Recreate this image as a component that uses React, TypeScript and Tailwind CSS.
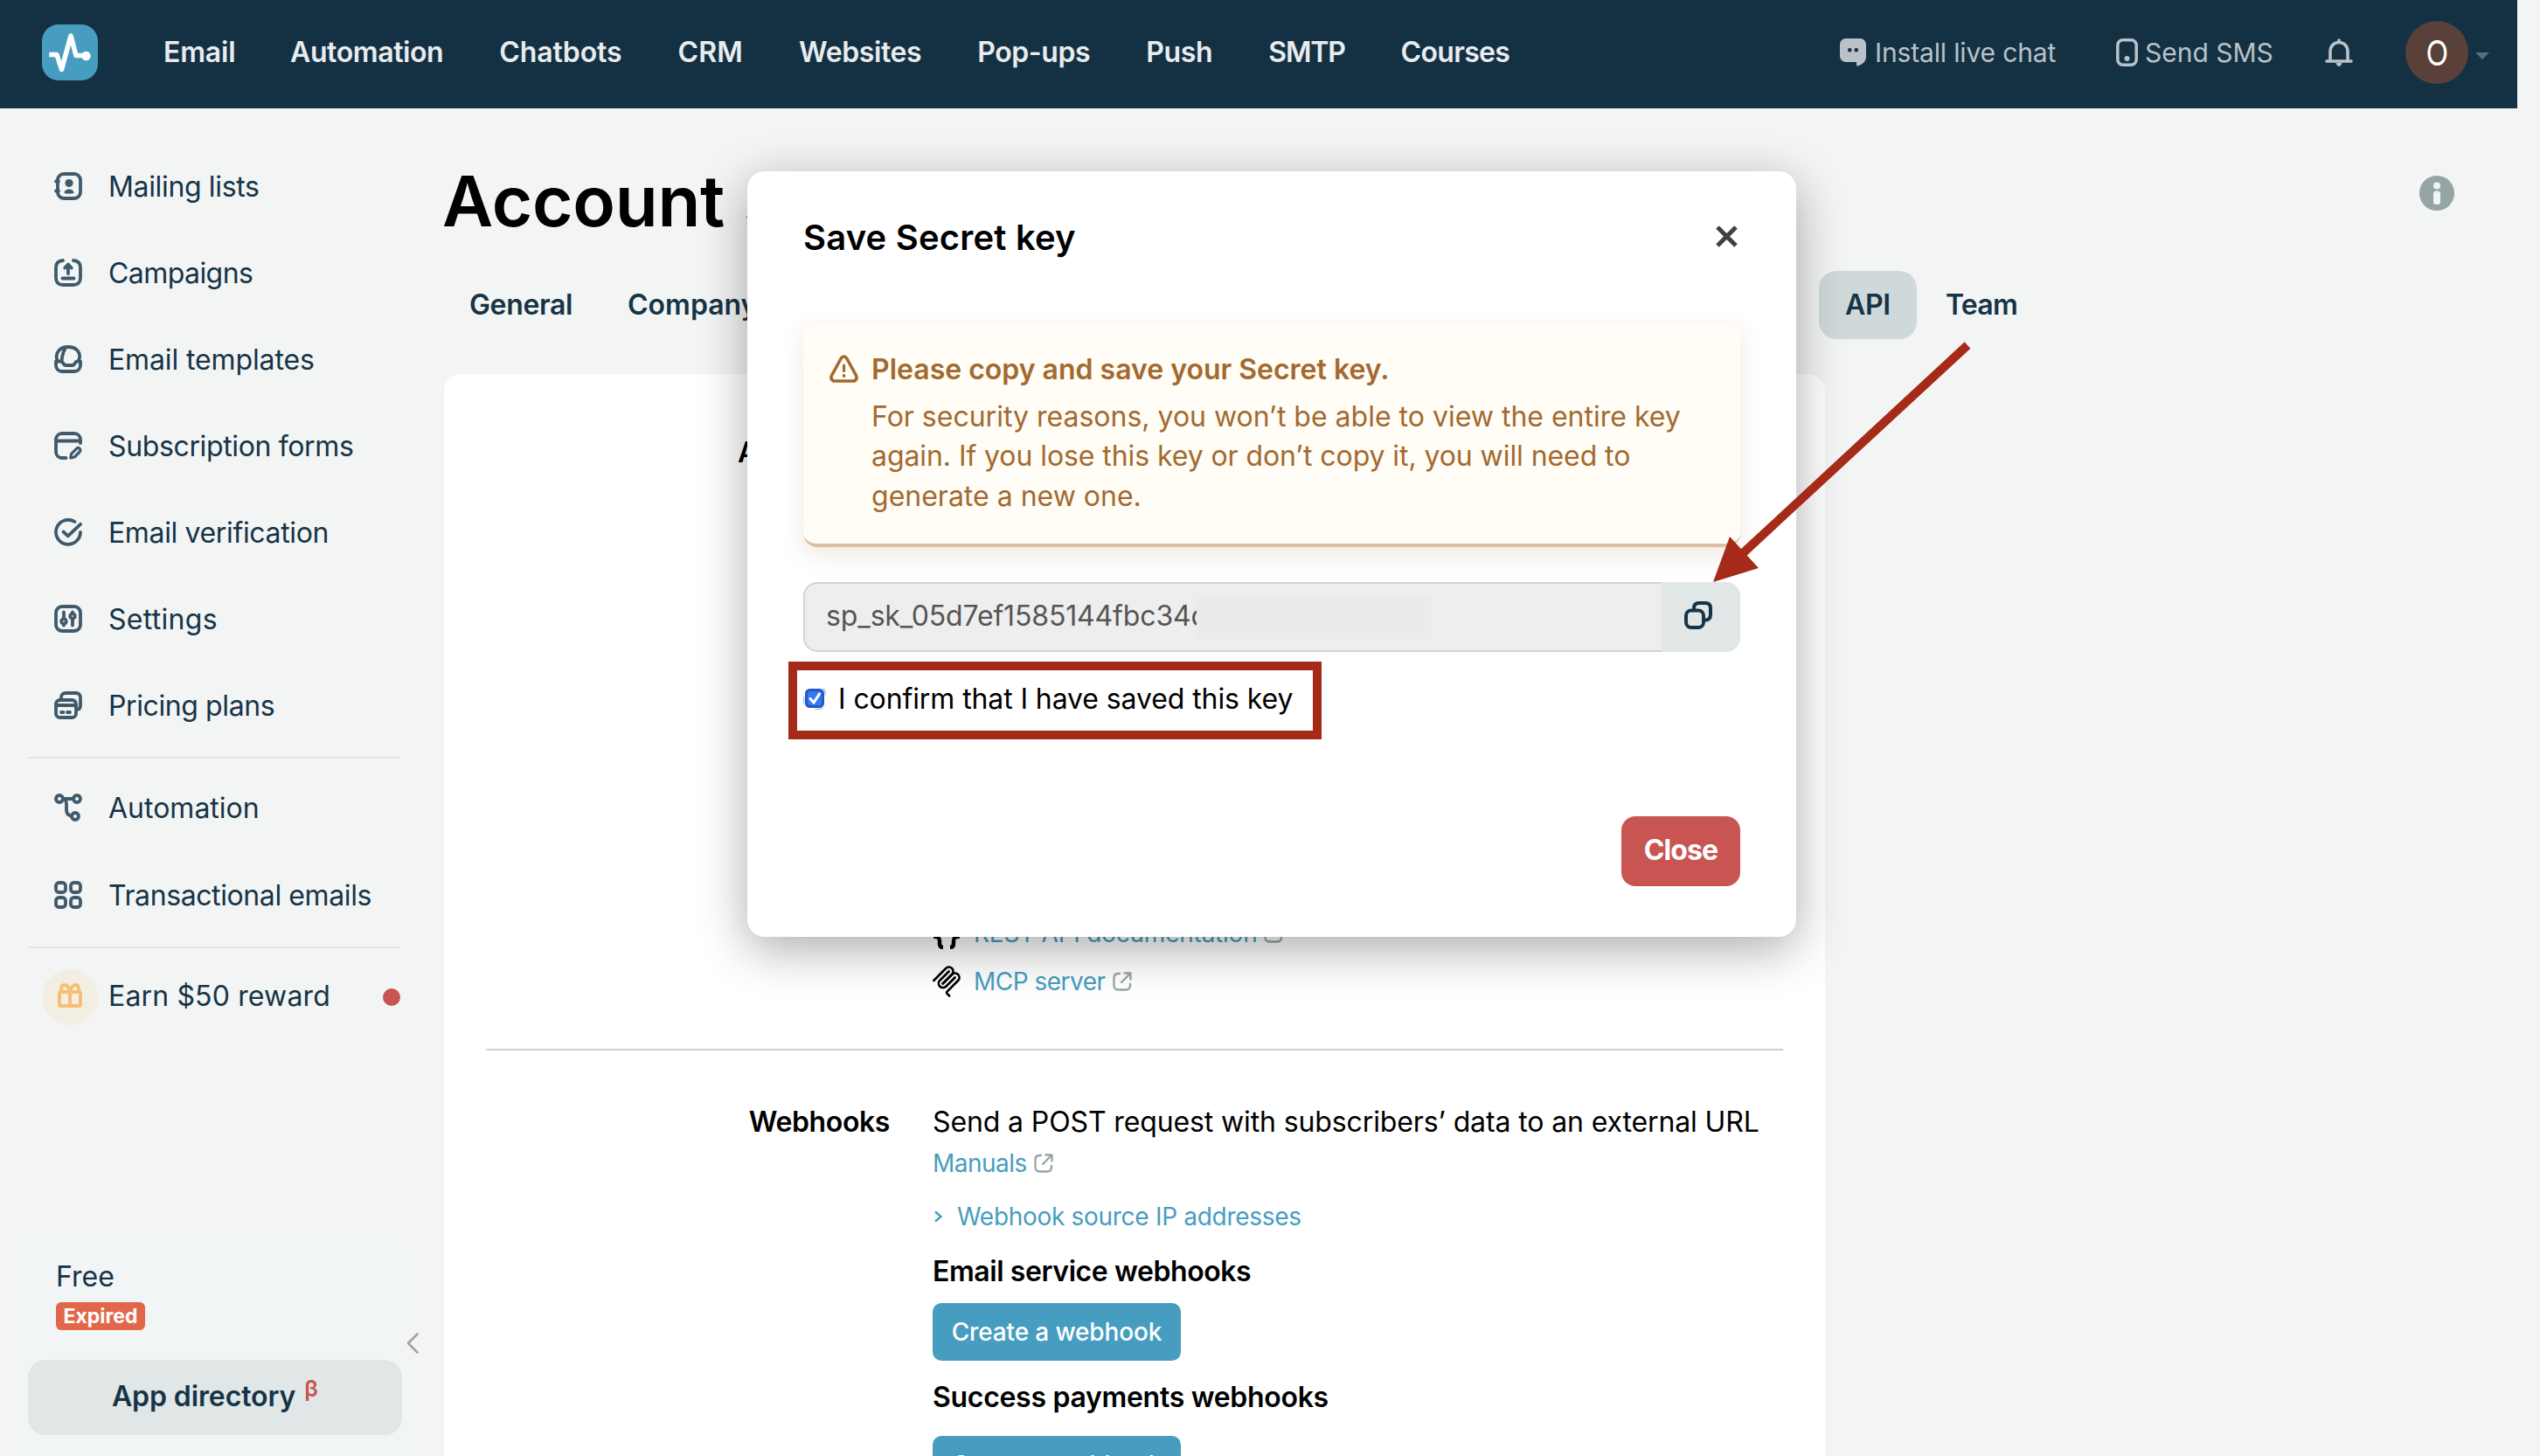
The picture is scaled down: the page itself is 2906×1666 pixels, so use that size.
import { useState, type ReactNode } from 'react';

const navItems = [
  { label: 'Email', className: 'w-[81px] tracking-[-0.2px]' },
  { label: 'Automation', className: 'tracking-[-0.4px]' },
  { label: 'Chatbots', className: 'tracking-[-0.1px]' },
  { label: 'CRM', className: 'tracking-[0.2px]' },
  { label: 'Websites', className: 'tracking-[-0.4px]' },
  { label: 'Pop-ups', className: 'tracking-[-0.4px]' },
  { label: 'Push', className: 'tracking-[-0.35px]' },
  { label: 'SMTP', className: 'tracking-[-1.2px]' },
  { label: 'Courses', className: 'tracking-[-0.7px]' },
];

function MenuIcon({ children }: { children: ReactNode }) {
  return (
    <svg
      viewBox="0 0 32 32"
      className="size-8 shrink-0 text-[#405a6b]"
      fill="none"
      stroke="currentColor"
      strokeWidth="3.8"
      strokeLinecap="round"
      strokeLinejoin="round"
    >
      {children}
    </svg>
  );
}

const mainMenu = [
  {
    label: 'Mailing lists',
    className: 'tracking-[-0.35px]',
    icon: (
      <>
        <rect x="4" y="2" width="26" height="28" rx="7" />
        <path d="M2 10.5h3M2 21.5h3" />
        <circle cx="17" cy="12.5" r="4.6" fill="currentColor" stroke="none" />
        <path d="M11.5 24c0-3 2.4-4.6 5.5-4.6s5.5 1.6 5.5 4.6c-3.5 1-7.5 1-11 0z" fill="currentColor" stroke="none" />
      </>
    ),
  },
  {
    label: 'Campaigns',
    className: 'tracking-[-0.57px]',
    icon: (
      <>
        <path d="M10 2C5 2.5 2 5 2 10v12c0 5 3 8 8 8h12c5 0 8-3 8-8V10c0-5-3-7.5-8-8" />
        <path d="M16 17V8M12.2 10.5L16 6.5l3.8 4" />
        <path d="M9.5 22.5h13" />
      </>
    ),
  },
  {
    label: 'Email templates',
    className: 'tracking-[-0.12px]',
    icon: (
      <>
        <path d="M3.5 17.5C.5 9 6 2 16 2s15.5 7 12 15.5" />
        <path d="M12.5 4C10 8 9 13 8.5 18" />
        <path d="M2 18.5V23c0 4 3 7 7 7h14c4 0 7-3 7-7v-4.5h-3.5c-1.5 0-2 .7-2.7 2-.8 1.5-1.8 2.5-3.3 2.5h-7c-1.5 0-2.5-1-3.3-2.5-.7-1.3-1.2-2-2.7-2z" />
      </>
    ),
  },
  {
    label: 'Subscription forms',
    className: 'tracking-[-0.36px]',
    icon: (
      <>
        <path d="M30 13V9c0-4-3-7-7-7H9C5 2 2 5 2 9v14c0 4 3 7 7 7h4.5" />
        <path d="M2 10.5h28" />
        <path d="M18.8 30l.8-4.6 6-6c1-1 2.6-1 3.6 0s1 2.6 0 3.6l-6 6z" strokeWidth="3.2" />
      </>
    ),
  },
  {
    label: 'Email verification',
    className: 'tracking-[-0.36px]',
    icon: (
      <>
        <path d="M23.5 4A14 14 0 1 0 30 15.8" />
        <path d="M10.5 15.5l5.3 4.8L30 6.8" />
      </>
    ),
  },
  {
    label: 'Settings',
    className: 'tracking-[0.3px]',
    icon: (
      <>
        <rect x="2" y="2" width="28" height="28" rx="7" />
        <path d="M11 8.5v15M21 8.5v15" />
        <circle cx="11" cy="19" r="2.8" fill="#f3f5f4" />
        <circle cx="21" cy="13" r="2.8" fill="#f3f5f4" />
      </>
    ),
  },
  {
    label: 'Pricing plans',
    className: 'tracking-[-0.4px]',
    icon: (
      <>
        <path d="M8 9V7c0-3 2-5 5-5h12c3 0 5 2 5 5v9c0 3-1 4.5-3.5 5" />
        <rect x="2" y="10" width="23" height="20" rx="4.5" />
        <path d="M2 16h23" />
        <path d="M8 24h2.5M15 24h3" />
      </>
    ),
  },
];

const serviceMenu = [
  {
    label: 'Automation',
    className: '',
    icon: (
      <>
        <circle cx="6" cy="6" r="4" />
        <circle cx="26" cy="6" r="4" />
        <circle cx="24" cy="26" r="4" />
        <path d="M10 6h12M10 6c3 .5 4 3 4 6v7c0 4 2 6 6 7" />
      </>
    ),
  },
  {
    label: 'Transactional emails',
    className: 'tracking-[-0.4px]',
    icon: (
      <>
        <rect x="2" y="2" width="11" height="11" rx="3.5" />
        <rect x="19" y="2" width="11" height="11" rx="3.5" />
        <rect x="2" y="19" width="11" height="11" rx="3.5" />
        <rect x="19" y="19" width="11" height="11" rx="3.5" />
      </>
    ),
  },
];

function ExternalIcon() {
  return (
    <svg viewBox="0 0 22 22" className="size-[22px] text-[#95a5a5]" fill="none" stroke="currentColor" strokeWidth="2.3" strokeLinecap="round" strokeLinejoin="round">
      <path d="M8 2H6.5C3.5 2 1.5 4 1.5 7v8.5c0 3 2 5 5 5H15c3 0 5-2 5-5V14" />
      <path d="M13.5 1.5h7v7M20 2L10 12" />
    </svg>
  );
}

function Header() {
  return (
    <header className="flex h-[124px] w-[2880px] items-center bg-[#143143] pb-1 pl-12 pr-8">
      <svg viewBox="0 0 64 64" className="size-16">
        <rect width="64" height="64" rx="19" fill="#479dc0" />
        <path d="M8.3 34.5H17l5.5 17L33 13l6 22.5h8" fill="none" stroke="#fff" strokeWidth="5.5" strokeLinejoin="round" />
        <circle cx="50.5" cy="36" r="5.2" fill="#fff" />
      </svg>
      <nav className="ml-[75px] flex gap-16 text-[32px] font-semibold text-[#e9ecee]">
        {navItems.map((item) => (
          <a key={item.label} className={item.className}>{item.label}</a>
        ))}
      </nav>
      <div className="ml-auto flex items-center text-[30px] text-[#b8c2c8]">
        <svg viewBox="0 0 30 32" className="h-8 w-[30px]" fill="currentColor">
          <path d="M7 0h16c4 0 7 3 7 7v14c0 5-4 9.5-11 10.5v-4.5H7c-4 0-7-3-7-7V7c0-4 3-7 7-7z" />
          <rect x="9" y="11" width="4.5" height="4.5" rx="2" fill="#143143" />
          <rect x="16.5" y="11" width="4.5" height="4.5" rx="2" fill="#143143" />
        </svg>
        <span className="ml-2.5 w-[209px] whitespace-nowrap tracking-[-0.15px]">Install live chat</span>
        <svg viewBox="0 0 25 32" className="ml-[67px] h-8 w-[25px]" fill="none" stroke="currentColor" strokeWidth="3.5">
          <rect x="1.8" y="1.8" width="21.4" height="28.4" rx="6" />
          <circle cx="12.5" cy="23" r="3" fill="currentColor" stroke="none" />
        </svg>
        <span className="ml-2 w-[148px] whitespace-nowrap">Send SMS</span>
        <svg viewBox="0 0 32 32" className="ml-[58px] size-8" fill="none" stroke="currentColor" strokeWidth="3.6" strokeLinecap="round" strokeLinejoin="round">
          <path d="M6 25.5V15C6 9 10 4.5 16 4.5S26 9 26 15v10.5" />
          <path d="M2 26h28M16 2v2" />
          <path d="M12.5 28h7c-.5 2-1.8 4-3.5 4s-3-2-3.500-4z" fill="currentColor" stroke="none" />
        </svg>
        <div className="ml-[60px] flex size-[72px] items-center justify-center rounded-full bg-[#594038] pt-0.5 text-[40px] text-white">
          <span className="scale-x-[0.84]">O</span>
        </div>
        <svg viewBox="0 0 16 8" className="ml-2 mt-2 h-2 w-4" fill="#556f7d">
          <path d="M0 0h16L8 8z" />
        </svg>
      </div>
    </header>
  );
}

function Sidebar() {
  return (
    <aside className="flex h-[1542px] w-[508px] shrink-0 flex-col pl-8 text-[32px] leading-8 text-[#163447]">
      <div className="flex flex-col gap-[67px] pl-[30px] pt-[73px]">
        {mainMenu.map((item) => (
          <a key={item.label} className="flex h-8 items-center gap-[30px] whitespace-nowrap">
            <MenuIcon>{item.icon}</MenuIcon>
            <span className="pt-px">
              <span className={item.className}>{item.label}</span>
            </span>
          </a>
        ))}
      </div>
      <hr className="mt-[43px] w-[426px] border-t-2 border-[#e1e4e3]" />
      <div className="mt-10 flex flex-col gap-[68px] pl-[30px]">
        {serviceMenu.map((item) => (
          <a key={item.label} className="flex h-8 items-center gap-[30px] whitespace-nowrap">
            <MenuIcon>{item.icon}</MenuIcon>
            <span className="pt-0.5">
              <span className={item.className}>{item.label}</span>
            </span>
          </a>
        ))}
      </div>
      <hr className="mt-[43px] w-[426px] border-t-2 border-[#e1e4e3]" />
      <a className="mt-6 flex w-[426px] items-center pl-4">
        <span className="flex size-16 items-center justify-center rounded-full bg-[#f3eee3] pb-1">
          <svg viewBox="0 0 28 28" className="size-7" fill="none" stroke="#f7bf73" strokeWidth="4" strokeLinejoin="round">
            <rect x="2" y="10" width="24" height="16" rx="1.5" />
            <path d="M14 9v17" />
            <path d="M14 10C13 5 10.5 2 7.5 2S3 6 4.5 9M14 10c1-5 3.5-8 6.5-8S25 6 23.5 9" strokeWidth="3.8" />
          </svg>
        </span>
        <span className="ml-3 pb-0.5 tracking-[0.15px]">Earn $50 reward</span>
        <span className="ml-auto size-5 rounded-full bg-[#c85552]" />
      </a>

      {/* Plan status and app directory */}
      <div className="mt-auto flex h-[250px] items-start">
        <div className="h-full w-[428px] bg-[#f1f5f6] pt-[29px]">
          <div className="pl-8">
            <p>Free</p>
            <span className="mt-[13px] flex h-8 w-[102px] items-center justify-center rounded-md bg-[#e2664a] text-[23px] font-bold text-white">
              Expired
            </span>
          </div>
          <button className="mt-[34px] flex h-[86px] w-[428px] items-center justify-center gap-2.5 rounded-[20px] bg-[#e1e7e7] pb-0.5 font-semibold">
            <span className="tracking-[-0.1px]">App directory</span>
            <span className="mb-[18px] text-[26px] leading-6 text-[#c85552]">β</span>
          </button>
        </div>
        <svg viewBox="0 0 14 24" className="ml-[5px] mt-[109px] h-6 w-3.5" fill="none" stroke="#a3a3a3" strokeWidth="2.6" strokeLinecap="round" strokeLinejoin="round">
          <path d="M12.5 1.5L2 12l10.5 10.5" />
        </svg>
      </div>
    </aside>
  );
}

function Content() {
  return (
    <main className="w-[1580px] shrink-0">
      <h1 className="-ml-0.5 mt-[66px] h-20 whitespace-nowrap text-[80px] font-semibold leading-[80px] tracking-[-0.3px] [word-spacing:2px]">Account settings</h1>
      <div className="mt-10 flex h-[78px] items-center whitespace-nowrap text-[32px] font-semibold text-[#163447]">
        <a className="ml-[29px] w-[181px] shrink-0 tracking-[-0.36px]">General</a>
        <a className="w-[1363px] shrink-0">Company</a>
        <a className="shrink-0 rounded-[20px] bg-[#d0d9d9] px-[30px] py-[15px] leading-[48px] tracking-[-0.3px]">API</a>
        <a className="ml-[33px] tracking-[-0.7px]">Team</a>
      </div>

      <section className="mt-10 h-[1300px] rounded-t-[20px] bg-white pl-12 pr-12 text-[32px] leading-[48px]">
        {/* API */}
        <div className="flex h-[772px] gap-[49px] pt-[66px]">
          <div className="w-[462px] pl-[288px] font-semibold">API keys</div>
          <div className="flex flex-col justify-end gap-[19px] pb-[59px] text-[28px] leading-9 text-[#479dc0]">
            <a className="flex h-9 items-center">
              <svg viewBox="0 0 32 36" className="h-9 w-8 text-black" fill="none" stroke="currentColor" strokeWidth="4.4">
                <path d="M12 3c-4 0-4 3-4 6v7c0 3-2 5.5-7 5.5 5 0 7 1.500 7 5v3c0 3 1 4.500 4 4.500" />
                <path d="M20 3c4 0 4 3 4 6v7c0 3 2 5.5 7 5.5-5 0-7 1.500-7 5v3c0 3-1 4.500-4 4.500" />
              </svg>
              <span className="ml-[15px] mr-2 tracking-[-0.23px]">REST API documentation</span>
              <ExternalIcon />
            </a>
            <a className="flex h-9 items-center">
              <svg viewBox="12 2 156 176" className="h-9 w-8 text-black" fill="none" stroke="currentColor" strokeWidth="13" strokeLinecap="round">
                <path d="M18 84.85L85.88 16.97C95.25 7.6 110.45 7.6 119.82 16.97C129.2 26.34 129.2 41.54 119.82 50.91L68.56 102.18" />
                <path d="M69.27 101.47L119.82 50.91C129.2 41.54 144.39 41.54 153.77 50.91L154.12 51.27C163.49 60.64 163.49 75.83 154.12 85.21L92.72 146.6C89.6 149.72 89.6 154.79 92.72 157.91L105.33 170.52" />
                <path d="M102.85 33.94L52.65 84.15C43.28 93.52 43.28 108.71 52.65 118.09C62.02 127.46 77.22 127.46 86.59 118.09L136.79 67.88" />
              </svg>
              <span className="ml-[15px] mr-2 tracking-[-0.5px]">MCP server</span>
              <ExternalIcon />
            </a>
          </div>
        </div>

        {/* Webhooks */}
        <div className="flex gap-[49px] whitespace-nowrap border-t-2 border-[#ccd3d3] pt-[58px]">
          <div className="w-[462px] text-right font-semibold tracking-[-0.39px]">Webhooks</div>
          <div className="flex flex-col items-start">
            <p className="tracking-[-0.12px]">Send a POST request with subscribers’ data to an external URL</p>
            <a className="mt-[5px] flex h-9 items-center gap-2 text-[28px] leading-9 tracking-[-0.5px] text-[#479dc0]">
              Manuals
              <ExternalIcon />
            </a>
            <a className="mt-[25px] flex h-9 items-center text-[28px] leading-9 tracking-[-0.3px] text-[#479dc0]">
              <svg viewBox="0 0 9 14" className="ml-0.5 mr-[17px] h-3.5 w-[9px]" fill="none" stroke="currentColor" strokeWidth="2.4">
                <path d="M1 1.5L7.5 7L1 12.5" />
              </svg>
              Webhook source IP addresses
            </a>
            <h3 className="mt-[21px] font-semibold tracking-[-0.42px]">Email service webhooks</h3>
            <button className="mt-3 h-[66px] w-[284px] rounded-[10px] bg-[#479dc0] text-[28px] font-medium leading-9 tracking-[-0.14px] text-white">
              Create a webhook
            </button>
            <h3 className="mt-[18px] font-semibold tracking-[-0.3px]">Success payments webhooks</h3>
            <button className="mt-5 h-[66px] w-[284px] rounded-[10px] bg-[#479dc0] text-[28px] font-medium leading-9 tracking-[-0.14px] text-white">
              Create a webhook
            </button>
          </div>
        </div>
      </section>
    </main>
  );
}

function SecretKeyModal() {
  const [confirmed, setConfirmed] = useState(true);

  return (
    <div role="dialog" className="absolute left-[855px] top-[196px] h-[876px] w-[1200px] rounded-[20px] bg-white px-16 pt-[52px] text-[32px] shadow-[0_14px_56px_rgba(0,0,0,0.33)]">
      <div className="flex items-center justify-between">
        <h2 className="text-[40px] font-semibold leading-[48px] tracking-[0.19px]">Save Secret key</h2>
        <button className="mb-1 mr-[3px]">
          <svg viewBox="0 0 25 25" className="size-[25px]" fill="none" stroke="#404040" strokeWidth="5">
            <path d="M2 2l21 21M23 2L2 23" />
          </svg>
        </button>
      </div>

      <div className="mt-[75px] flex h-[255px] gap-[15px] rounded-2xl border-b-4 border-[#dcc0a0] bg-[#fffdf6] pl-[30px] pt-[29px] leading-[45.7px] text-[#a3692f] shadow-[0_8px_28px_rgba(120,70,20,0.13)]">
        <svg viewBox="0 0 33 32" className="mt-1.5 h-8 w-[33px] shrink-0" fill="none" stroke="currentColor" strokeWidth="3.6" strokeLinecap="round" strokeLinejoin="round">
          <path d="M13.3 4L2.6 23.5C1 26.5 2.6 30 6 30h21c3.4 0 5-3.5 3.4-6.5L19.7 4c-1.6-2.7-4.8-2.7-6.4 0z" />
          <path d="M16.5 12v6.5" strokeWidth="3.2" />
          <circle cx="16.5" cy="24" r="1.9" fill="currentColor" stroke="none" />
        </svg>
        <div className="whitespace-nowrap">
          <p className="font-semibold">Please copy and save your Secret key.</p>
          <p className="mt-2">
            For security reasons, you won’t be able to view the entire key<br />
            <span className="tracking-[-0.08px]">again. If you lose this key or don’t copy it, you will need to</span><br />
            generate a new one.
          </p>
        </div>
      </div>

      <div className="mt-10 flex h-20">
        <div className="flex w-[982px] items-center rounded-l-2xl border-2 border-r-0 border-[#cfd5d5] bg-[#eeeeee] pl-6 text-[#555555]">
          <span className="w-[424px] overflow-hidden whitespace-nowrap pb-0.5 leading-10 tracking-[-0.15px]">sp_sk_05d7ef1585144fbc34d</span>
          <span className="h-[49px] w-[268px] bg-[#ebebeb]" />
        </div>
        <button className="flex w-[90px] items-center justify-center rounded-r-2xl bg-[#e1e7e7] pb-1 pr-1.5">
          <svg viewBox="0 0 32 32" className="size-8" fill="none" stroke="#163447" strokeWidth="4">
            <path d="M11 9V8c0-4 2-6 6-6h7c4 0 6 2 6 6v7c0 4-2 6.5-6 6.5h-1" />
            <rect x="2" y="10.5" width="20" height="19.5" rx="6" />
          </svg>
        </button>
      </div>

      <label className="relative mt-[30px] flex h-12 items-center leading-[48px] tracking-[-0.1px]">
        <input type="checkbox" className="sr-only" checked={confirmed} onChange={(e) => setConfirmed(e.target.checked)} />
        <svg viewBox="0 0 26 26" className="-mt-0.5 mr-3.5 size-[26px]" fill="none">
          <rect x="0.7" y="0.7" width="24.6" height="24.6" rx="6" stroke="#9dbcf7" strokeWidth="1.2" strokeDasharray="9 15.6" strokeDashoffset="9" />
          <rect x="3.5" y="3.5" width="19" height="19" rx="4" fill="#3478f6" stroke="#2559c0" strokeWidth="3" />
          {confirmed && <path d="M8 13.5l4 4.5L18.5 8" stroke="#fff" strokeWidth="3.2" strokeLinecap="round" strokeLinejoin="round" />}
        </svg>
        I confirm that I have saved this key
        <span className="absolute -left-[17px] -top-[19px] h-[89px] w-[610px] border-10 border-[#a52a17]" />
      </label>

      <div className="mt-[110px] flex justify-end">
        <button className="h-20 w-[136px] rounded-2xl bg-[#c85552] pb-0.5 font-bold tracking-[-0.9px] text-white">Close</button>
      </div>
    </div>
  );
}

export default function App() {
  return (
    <div className="relative h-[1666px] w-[2906px] overflow-hidden bg-[#f3f5f4] font-['Inter',sans-serif] text-black">
      <Header />
      <div className="flex">
        <Sidebar />
        <Content />
        <svg viewBox="0 0 40 40" className="ml-[680px] mt-[77px] size-10 shrink-0">
          <circle cx="20" cy="20" r="20" fill="#95a5a5" />
          <rect x="16" y="7.5" width="8" height="8" rx="4" fill="#f3f5f4" />
          <rect x="16" y="17.5" width="8" height="15.5" rx="3.5" fill="#f3f5f4" />
        </svg>
      </div>
      <SecretKeyModal />
      {/* Pointer to the copy button */}
      <svg viewBox="0 0 300 280" className="absolute left-[1956px] top-[390px] h-[280px] w-[300px]">
        <path d="M295 5L38 243" stroke="#a52a17" strokeWidth="10" />
        <path d="M4 276l19-52 33 36z" fill="#a52a17" />
      </svg>
    </div>
  );
}
